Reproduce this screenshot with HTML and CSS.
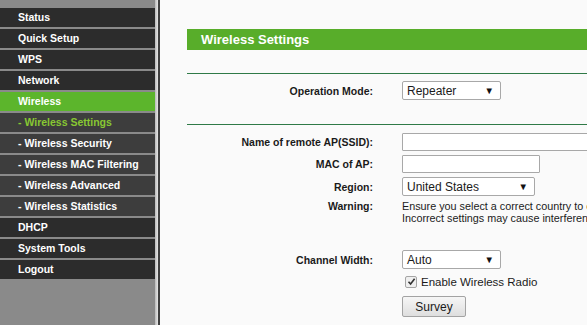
FILE: index.html
```html
<!DOCTYPE html>
<html>
<head>
<meta charset="utf-8">
<link rel="stylesheet" href="styles.css">
</head>
<body>
<div class="page">
  <nav class="sidebar">
    <div class="item">Status</div>
    <div class="item">Quick Setup</div>
    <div class="item">WPS</div>
    <div class="item">Network</div>
    <div class="item active">Wireless</div>
    <div class="item sub current">- Wireless Settings</div>
    <div class="item sub">- Wireless Security</div>
    <div class="item sub">- Wireless MAC Filtering</div>
    <div class="item sub">- Wireless Advanced</div>
    <div class="item sub">- Wireless Statistics</div>
    <div class="item">DHCP</div>
    <div class="item">System Tools</div>
    <div class="item">Logout</div>
  </nav>
  <div class="edge"></div>
  <main class="content">
    <div class="title">Wireless Settings</div>
    <div class="section first">
      <div class="grid">
        <div class="label">Operation Mode:</div>
        <div class="field"><div class="select w100"><span>Repeater</span><span class="arrow">&#9660;</span></div></div>
      </div>
    </div>
    <div class="section second">
      <div class="grid rows">
        <div class="label">Name of remote AP(SSID):</div>
        <div class="field"><input class="text wide" type="text"></div>
        <div class="label">MAC of AP:</div>
        <div class="field"><input class="text mac" type="text"></div>
        <div class="label">Region:</div>
        <div class="field"><div class="select w133"><span>United States</span><span class="arrow">&#9660;</span></div></div>
        <div class="label top">Warning:</div>
        <div class="field warn">Ensure you select a correct country to conform local law.<br>Incorrect settings may cause interference.</div>
        <div class="label spaced">Channel Width:</div>
        <div class="field spaced"><div class="select w100"><span>Auto</span><span class="arrow">&#9660;</span></div></div>
        <div class="label"></div>
        <div class="field check"><span class="box"><svg width="9" height="9" viewBox="0 0 9 9"><path d="M1.5 4.8 L3.6 7 L7.6 1.8" fill="none" stroke="#333" stroke-width="1.6"/></svg></span><span>Enable Wireless Radio</span></div>
        <div class="label"></div>
        <div class="field"><button class="btn" type="button">Survey</button></div>
      </div>
    </div>
  </main>
</div>
</body>
</html>
```
FILE: styles.css
```css
html, body {
  margin: 0;
  padding: 0;
}
body {
  font-family: "Liberation Sans", Arial, sans-serif;
  width: 587px;
  height: 325px;
  overflow: hidden;
  background: #fafafa;
}
.page {
  display: flex;
  height: 325px;
}
.sidebar {
  width: 155px;
  flex: none;
  background: #8a8a8a;
  padding-top: 8px;
  box-sizing: border-box;
}
.item {
  height: 19px;
  line-height: 19px;
  margin-bottom: 2px;
  padding-left: 18px;
  background: #2c2c2c;
  color: #ffffff;
  font-weight: bold;
  font-size: 10.5px;
  white-space: nowrap;
}
.item.sub {
  background: #3d3d3d;
}
.item.active {
  background: #5cb52c;
}
.item.current {
  color: #88c832;
}
.edge {
  width: 3px;
  flex: none;
  background: linear-gradient(to right, #b9b9b9, #e6e6e6);
  border-right: 2px solid #3f3f3f;
}
.content {
  flex: 1;
  min-width: 0;
  overflow: hidden;
  padding: 29px 0 0 27px;
  background: #fafafa;
}
.title {
  height: 21px;
  line-height: 21px;
  background: #58ad2a;
  color: #ffffff;
  font-weight: bold;
  font-size: 13px;
  padding-left: 14px;
  white-space: nowrap;
}
.section {
  border-top: 1px solid #2f7a47;
}
.section.first {
  margin-top: 23px;
  padding: 7px 0 24px;
}
.section.second {
  padding-top: 8px;
}
.grid {
  display: grid;
  grid-template-columns: 186px 1fr;
  column-gap: 29px;
  align-items: center;
}
.grid.rows {
  row-gap: 4px;
}
.label {
  text-align: right;
  font-weight: bold;
  font-size: 10.5px;
  color: #1a1a1a;
  white-space: nowrap;
}
.label.top {
  align-self: start;
  line-height: 12px;
}
.field {
  font-size: 11px;
  color: #1a1a1a;
  white-space: nowrap;
  min-width: 0;
}
.select {
  height: 19px;
  box-sizing: border-box;
  border: 1px solid #a8a8a8;
  border-radius: 2px;
  background: #ffffff;
  display: flex;
  align-items: center;
  justify-content: space-between;
  padding: 0 6px 0 4px;
  font-size: 12px;
}
.select .arrow {
  font-size: 9.5px;
  color: #111;
}
.w100 { width: 99px; }
.w133 { width: 133px; }
.text {
  display: block;
  height: 18px;
  box-sizing: border-box;
  border: 1px solid #a8a8a8;
  border-radius: 1px;
  background: #ffffff;
  margin: 0;
  padding: 0 3px;
}
.text.wide { width: 220px; }
.text.mac { width: 138px; }
.warn {
  line-height: 12px;
  font-size: 10.8px;
  align-self: start;
  overflow: hidden;
}
.spaced {
  margin-top: 22px;
}
.check {
  display: flex;
  align-items: center;
  gap: 4px;
  height: 17px;
  padding-left: 3px;
  font-size: 11.5px;
}
.box {
  width: 10px;
  height: 10px;
  border: 1px solid #a5a5a5;
  border-radius: 2px;
  background: #efefef;
  display: flex;
  align-items: center;
  justify-content: center;
}
.btn {
  width: 64px;
  height: 21px;
  box-sizing: border-box;
  border: 1px solid #a3a3a3;
  border-radius: 2px;
  background: linear-gradient(#f6f6f6, #dedede);
  font-family: "Liberation Sans", Arial, sans-serif;
  font-size: 12px;
  color: #1a1a1a;
  padding: 0;
  margin-top: 2px;
}
```
